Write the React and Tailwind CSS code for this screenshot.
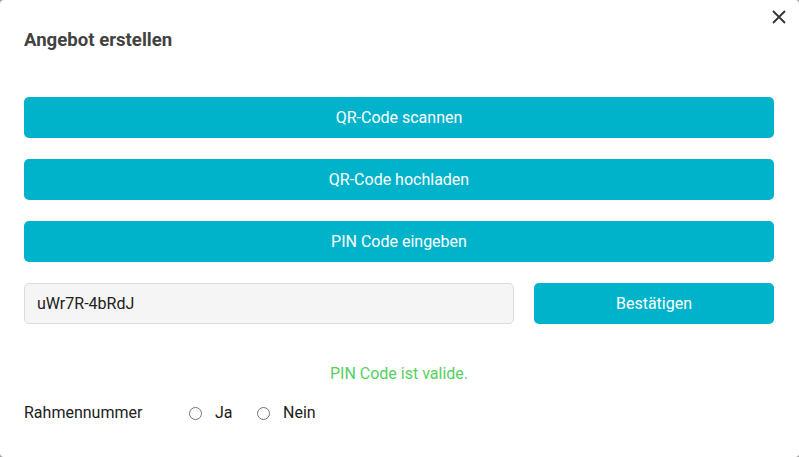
import React from "react";

export default function App() {
  const btn =
    "w-full h-[41px] rounded-[5px] bg-[#00b3cb] text-white text-[16px] flex items-center justify-center";
  return (
    <div className="w-[799px] h-[457px] bg-[#9e9e9e] overflow-hidden" style={{ fontFamily: "Roboto, 'Liberation Sans', sans-serif" }}>
      <div className="relative w-[799px] h-[457px] bg-white rounded-[4px] pl-6 pr-[25px]">
        <button className="absolute right-[10px] top-[7px] w-[20px] h-[20px] flex items-center justify-center text-[#333]">
          <svg width="16" height="16" viewBox="0 0 16 16" fill="none" stroke="currentColor" strokeWidth="1.8">
            <path d="M2 2L14 14M14 2L2 14" />
          </svg>
        </button>
        <h2 className="pt-[29px] h-[97px] text-[18.6px] font-bold text-[#424242] leading-[22px]">Angebot erstellen</h2>
        <div className="flex flex-col gap-[21px]">
          <div className={btn}>QR-Code scannen</div>
          <div className={btn}>QR-Code hochladen</div>
          <div className={btn}>PIN Code eingeben</div>
          <div className="flex gap-[20px]">
            <div className="w-[490px] h-[41px] rounded-[5px] bg-[#f5f5f5] border border-[#dcdcdc] flex items-center pl-3 text-[16px] text-[#212121]">
              uWr7R-4bRdJ
            </div>
            <div className="flex-1 h-[41px] rounded-[5px] bg-[#00b3cb] text-white text-[16px] flex items-center justify-center">
              Bestätigen
            </div>
          </div>
        </div>
        <div className="mt-[40px] text-center text-[16px] text-[#55d05e] leading-[20px]">PIN Code ist valide.</div>
        <div className="mt-[19px] flex items-center text-[16px] text-[#212121] leading-[20px]">
          <span className="w-[165px]">Rahmennummer</span>
          <span className="w-[13px] h-[13px] rounded-full border border-[#757575] bg-white"></span>
          <span className="ml-[13px] w-[42px]">Ja</span>
          <span className="w-[13px] h-[13px] rounded-full border border-[#757575] bg-white"></span>
          <span className="ml-[13px]">Nein</span>
        </div>
      </div>
    </div>
  );
}
